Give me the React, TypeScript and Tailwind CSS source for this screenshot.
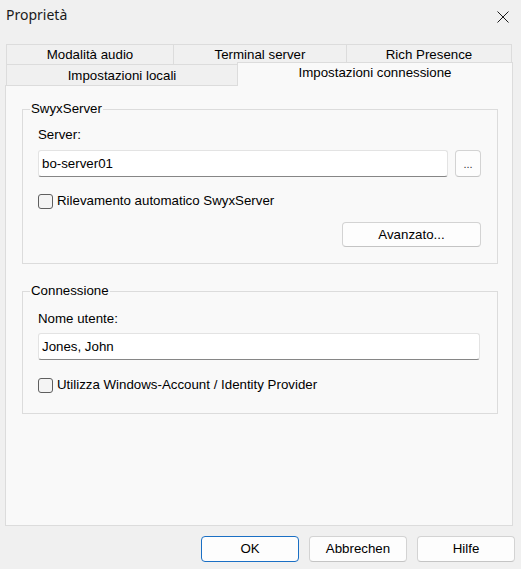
import React from "react";

function Checkbox({ label }: { label: string }) {
  return (
    <label className="flex h-[16px] items-center gap-[4px]">
      <span className="block h-[15px] w-[15px] rounded-[3px] border border-[#5f5f5f] bg-[#f4f4f4]" />
      <span className="leading-[16px]">{label}</span>
    </label>
  );
}

function TextBox({ value, width }: { value: string; width: string }) {
  return (
    <div
      className={`${width} flex h-[27px] items-center rounded-[3px] border border-[#e3e3e3] border-b-[#868686] bg-white pl-[3px]`}
    >
      <span className="leading-[16px]">{value}</span>
    </div>
  );
}

function PushButton({
  children,
  width,
  primary = false,
}: {
  children: React.ReactNode;
  width: string;
  primary?: boolean;
}) {
  return (
    <button
      type="button"
      className={`${width} flex items-center justify-center rounded-[4px] border bg-[#fdfdfd] leading-[16px] ${
        primary ? "border-[#1a6fc4]" : "border-[#d3d3d3] border-b-[#c4c4c4]"
      }`}
    >
      {children}
    </button>
  );
}

export default function App() {
  return (
    <div className="h-[569px] w-[521px] overflow-hidden bg-[#f0f0f0] font-['Liberation_Sans',Arial,sans-serif] text-[13.3px] text-black">
      {/* title bar */}
      <div className="flex h-[30px] items-center justify-between pl-[6px] pr-[12px]">
        <span className="font-['Noto_Sans',sans-serif] text-[14px] leading-[18px] text-[#1a1a1a]">
          Proprietà
        </span>
        <svg width="12" height="12" viewBox="0 0 12 12" className="mt-[3px]">
          <path d="M0.5 0.5 L11.5 11.5 M11.5 0.5 L0.5 11.5" stroke="#1a1a1a" strokeWidth="1" fill="none" />
        </svg>
      </div>

      {/* tab strip, two rows */}
      <div className="mt-[14px]">
        <div className="ml-[6px] flex h-[20px]">
          <div className="w-[168px] border-l border-r border-t border-[#dcdcdc] text-center leading-[20px]">
            Modalità audio
          </div>
          <div className="-ml-px w-[174px] border-l border-r border-t border-[#dcdcdc] text-center leading-[20px]">
            Terminal server
          </div>
          <div className="-ml-px w-[166px] border-l border-r border-t border-[#dcdcdc] text-center leading-[20px]">
            Rich Presence
          </div>
        </div>
        <div className="ml-[6px] flex h-[21px] items-start">
          <div className="h-[21px] w-[232px] border-l border-r border-t border-[#dcdcdc] text-center leading-[21px]">
            Impostazioni locali
          </div>
          <div className="relative z-10 -ml-px -mt-[2px] h-[24px] w-[276px] border-l border-r border-t border-[#dcdcdc] bg-[#f9f9f9] text-center leading-[20px]">
            Impostazioni connessione
          </div>
        </div>
      </div>

      {/* tab page */}
      <div className="ml-[5px] h-[441px] w-[508px] border border-[#dcdcdc] bg-[#f9f9f9] pl-[16px] pt-[15px]">
        <fieldset className="w-[476px] border border-[#dcdcdc] pb-[16px] pl-[15px] pr-[16px] pt-[10px]">
          <legend className="-ml-[8px] px-[1px] leading-[16px]">SwyxServer</legend>
          <div className="leading-[16px]">Server:</div>
          <div className="mt-[7px] flex gap-[7px]">
            <TextBox value="bo-server01" width="w-[410px]" />
            <PushButton width="w-[26px] h-[27px]">
              <span className="text-[11px] text-[#333]">...</span>
            </PushButton>
          </div>
          <div className="mt-[16px]">
            <Checkbox label="Rilevamento automatico SwyxServer" />
          </div>
          <div className="mt-[13px] flex justify-end">
            <PushButton width="w-[139px] h-[25px]">Avanzato...</PushButton>
          </div>
        </fieldset>

        <fieldset className="mt-[19px] w-[476px] border border-[#dcdcdc] pb-[20px] pl-[15px] pr-[16px] pt-[12px]">
          <legend className="-ml-[8px] px-[1px] leading-[16px]">Connessione</legend>
          <div className="leading-[16px]">Nome utente:</div>
          <div className="mt-[6px]">
            <TextBox value="Jones, John" width="w-[442px]" />
          </div>
          <div className="mt-[17px]">
            <Checkbox label="Utilizza Windows-Account / Identity Provider" />
          </div>
        </fieldset>
      </div>

      {/* dialog buttons */}
      <div className="mt-[10px] flex justify-end gap-[10px] pr-[6px]">
        <PushButton width="w-[98px] h-[26px]" primary>
          OK
        </PushButton>
        <PushButton width="w-[98px] h-[26px]">Abbrechen</PushButton>
        <PushButton width="w-[98px] h-[26px]">Hilfe</PushButton>
      </div>
    </div>
  );
}
